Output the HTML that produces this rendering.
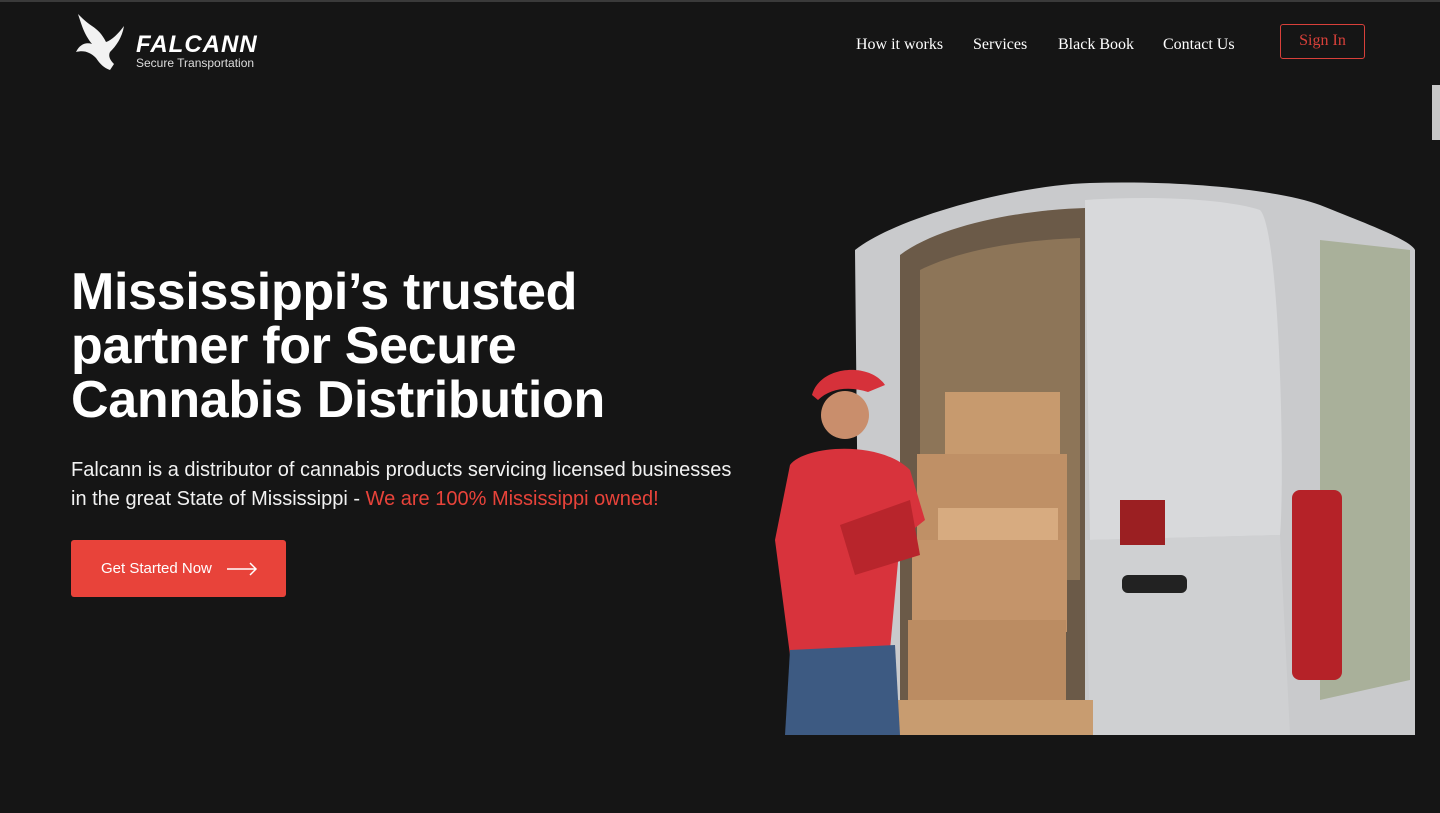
<!DOCTYPE html>
<html><head><meta charset="utf-8"><style>
*{margin:0;padding:0;box-sizing:border-box}
body{width:1440px;height:813px;background:#151515;overflow:hidden;position:relative;font-family:"Liberation Sans",Arial,sans-serif;color:#fff}
.topline{position:absolute;top:0;left:0;width:1440px;height:2px;background:#3a3a3a}
.scroll{position:absolute;right:0;top:85px;width:8px;height:55px;background:#c8c8c8}
nav a{position:absolute;top:36px;font-family:"Liberation Serif",serif;font-size:16px;color:#fff;text-decoration:none}
.signin{position:absolute;left:1280px;top:24px;width:85px;height:35px;border:1px solid #d8403a;border-radius:3px;color:#d8403a;font-family:"Liberation Serif",serif;font-size:16px;text-align:center;line-height:31px}
h1{position:absolute;left:71px;top:265px;font-size:52px;line-height:54px;font-weight:700;letter-spacing:-0.3px;width:600px}
p{position:absolute;left:71px;top:456px;font-size:20px;line-height:29px;color:#f2f2f2;width:680px}
p span{color:#e8433a}
.btn{position:absolute;left:71px;top:540px;width:215px;height:57px;background:#e8433a;border-radius:3px;font-size:15px;line-height:57px;padding-left:30px;color:#fff}
.btn svg{position:absolute;left:155px;top:22px}
</style></head><body>
<div class="topline"></div>
<svg style="position:absolute;left:74px;top:12px" width="56" height="62" viewBox="0 0 56 62">
<path d="M4 2 C8 14 10 22 18 32 C12 30 6 32 2 40 C10 38 16 40 22 46 C26 52 30 56 36 58 L40 52 C36 48 34 44 36 40 C42 34 48 26 50 14 C44 22 38 28 32 30 C28 22 24 18 18 14 C12 10 8 6 4 2 Z" fill="#f2f2f2"/>
</svg>
<div style="position:absolute;left:136px;top:33px;font-size:24px;font-weight:700;font-style:italic;letter-spacing:1px;line-height:24px">FALCANN</div>
<div style="position:absolute;left:136px;top:56px;font-size:12px;color:#ddd">Secure Transportation</div>
<nav><a style="left:856px">How it works</a><a style="left:973px">Services</a><a style="left:1058px">Black Book</a><a style="left:1163px">Contact Us</a></nav>
<div class="signin">Sign In</div>
<div class="scroll"></div>
<h1>Mississippi’s trusted partner for Secure Cannabis Distribution</h1>
<p>Falcann is a distributor of cannabis products servicing licensed businesses in the great State of Mississippi - <span>We are 100% Mississippi owned!</span></p>
<div class="btn">Get Started Now<svg width="32" height="14" viewBox="0 0 32 14"><path d="M1 7H30M24 1L30 7L24 13" stroke="#fff" stroke-width="1.5" fill="none"/></svg></div>
<svg style="position:absolute;left:760px;top:180px" width="660" height="560" viewBox="0 0 660 560">
<path d="M95 70 C140 35 260 5 330 3 C420 0 520 10 560 25 C610 45 650 60 655 70 L655 555 L100 555 Z" fill="#c9cacc"/>
<path d="M140 75 C180 45 260 30 325 28 L325 555 L140 555 Z" fill="#6b5a48"/>
<path d="M160 90 C200 70 260 60 320 58 L320 400 L160 400 Z" fill="#8d7558"/>
<path d="M325 20 C400 15 470 20 500 30 C520 50 525 300 520 355 L330 360 Z" fill="#d8d9db"/>
<path d="M325 360 L520 355 L530 555 L330 555 Z" fill="#cfd0d2"/>
<path d="M560 60 L650 70 L650 500 L560 520 Z" fill="#a9b09a"/>
<rect x="532" y="310" width="50" height="190" rx="8" fill="#b52228"/>
<rect x="360" y="320" width="45" height="45" fill="#9b1f22"/>
<rect x="362" y="395" width="65" height="18" rx="6" fill="#222"/>
<rect x="185" y="212" width="115" height="62" fill="#c79a6e"/>
<rect x="157" y="274" width="150" height="92" fill="#bf9066"/>
<rect x="178" y="328" width="120" height="36" fill="#d7ab80"/>
<rect x="152" y="360" width="155" height="92" fill="#c4946a"/>
<rect x="148" y="440" width="158" height="95" fill="#bb8c62"/>
<rect x="108" y="520" width="225" height="35" fill="#c89c70"/>
<circle cx="85" cy="235" r="24" fill="#c98e6c"/>
<path d="M52 215 C60 185 110 182 125 205 L108 212 C90 206 70 208 58 220 Z" fill="#d6313a"/>
<path d="M30 285 C45 265 120 260 150 290 L165 340 L140 360 L130 470 L30 475 L15 360 Z" fill="#d8333c"/>
<path d="M30 470 L135 465 L140 555 L25 555 Z" fill="#3d5a82"/>
<path d="M80 345 L150 320 L160 375 L95 395 Z" fill="#b8252c"/>
</svg>
</body></html>
